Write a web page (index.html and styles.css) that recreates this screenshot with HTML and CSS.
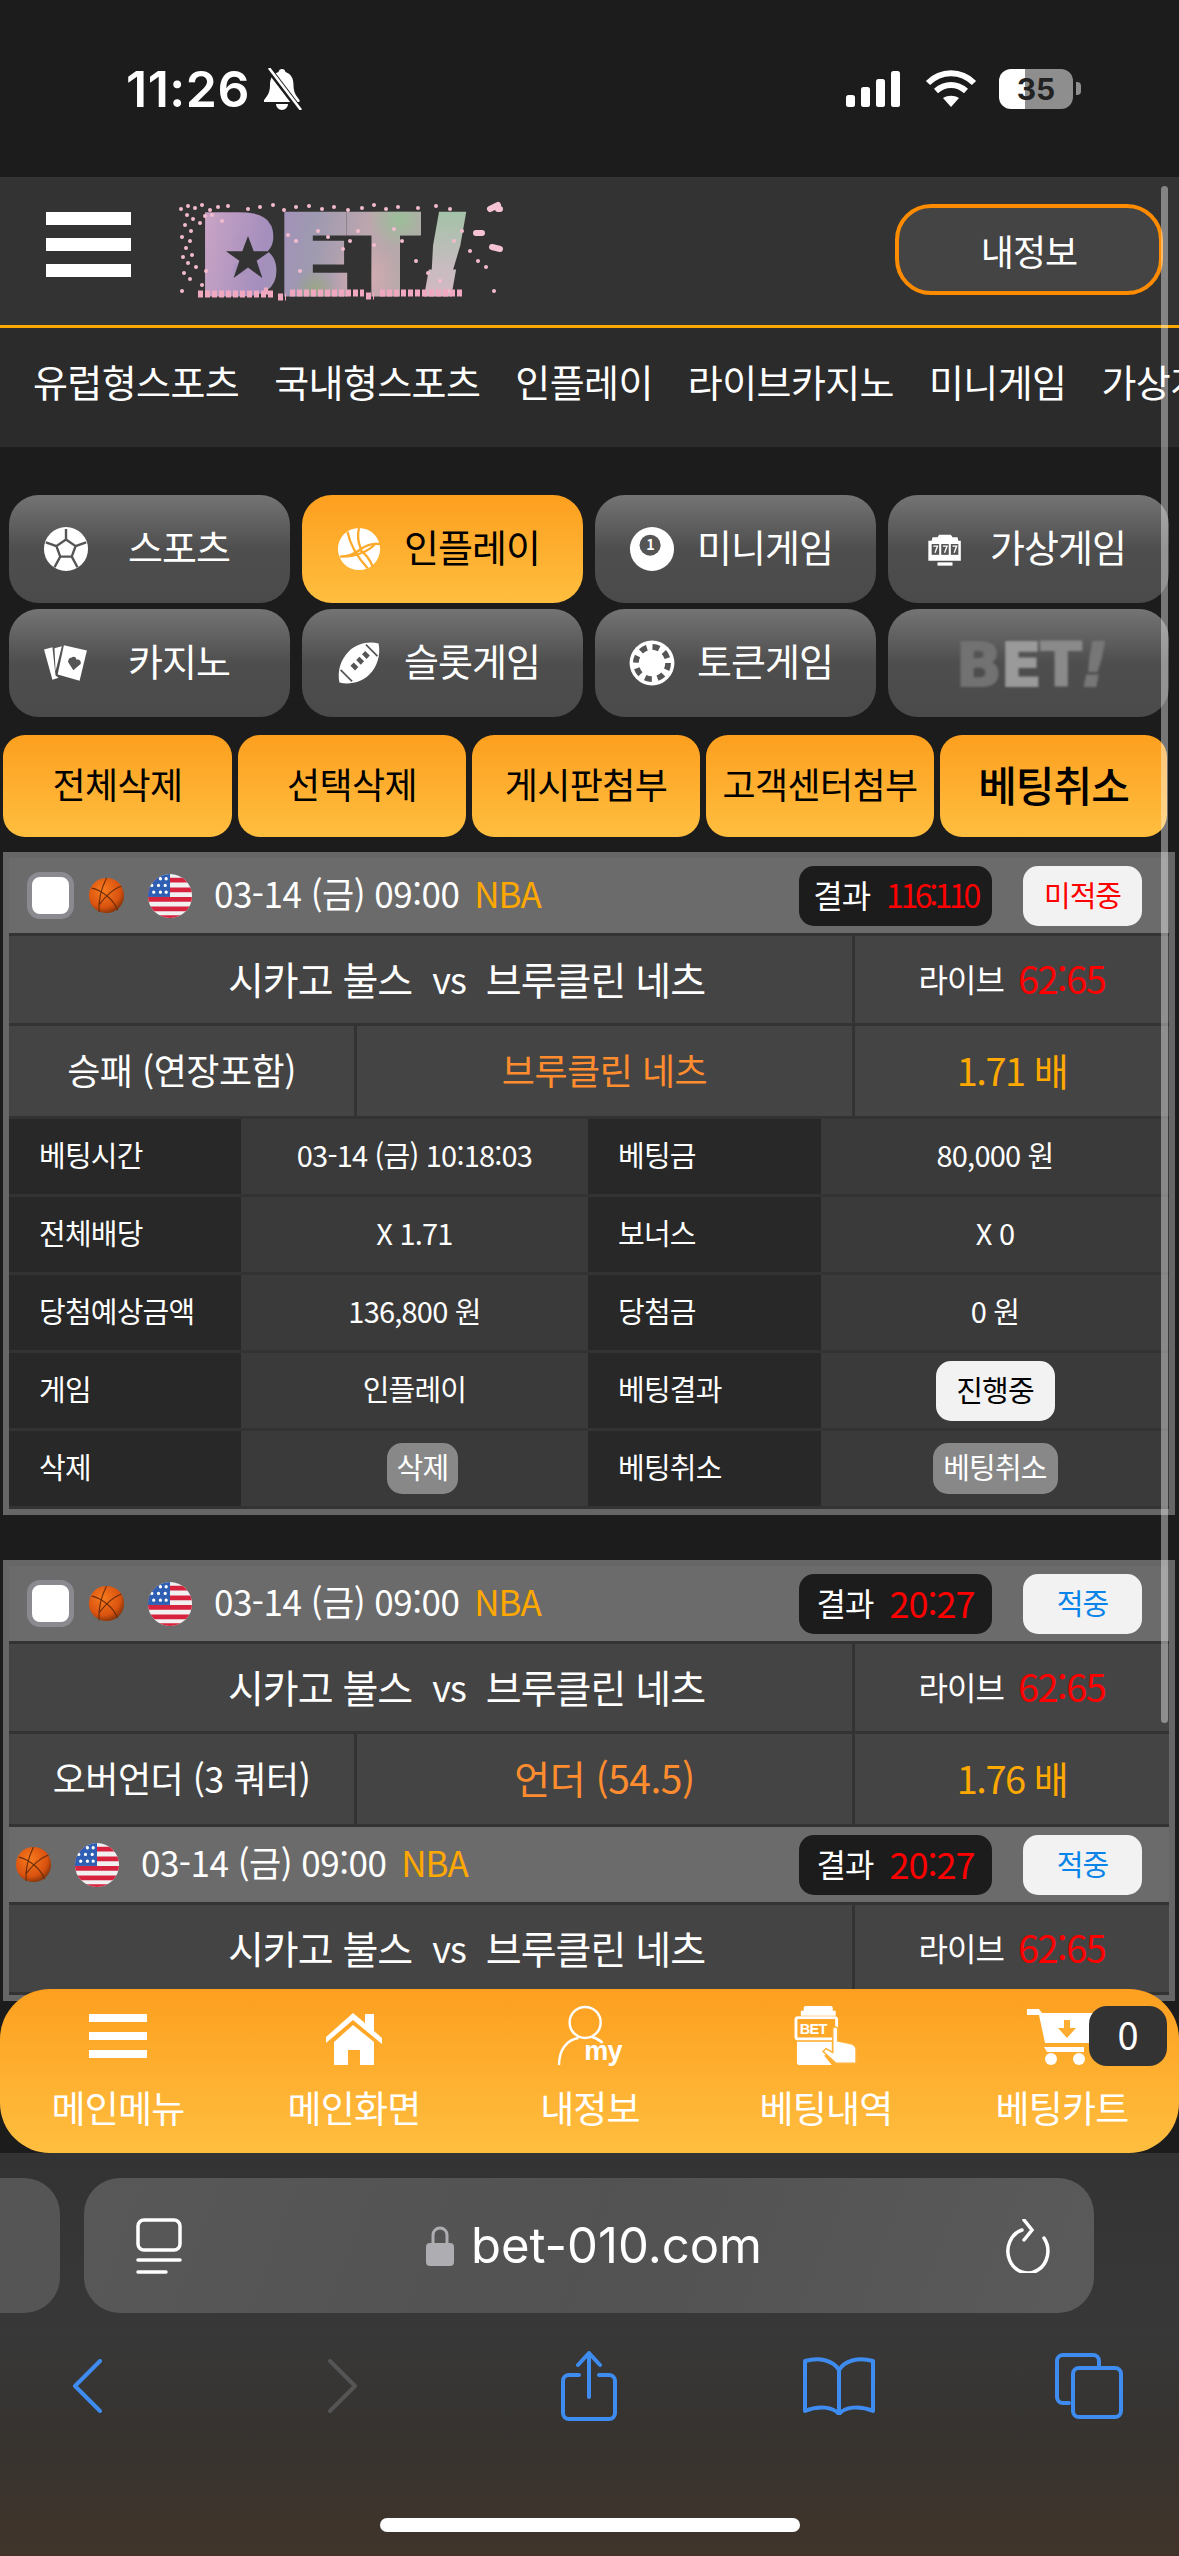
FILE: index.html
```html
<!DOCTYPE html>
<html lang="ko">
<head>
  <meta charset="UTF-8" />
  <meta name="viewport" content="width=device-width, initial-scale=1" />
  <title>BET!</title>
  <link rel="stylesheet" href="styles.css">
</head>
<body>

  <svg class="defs" aria-hidden="true">
    <defs>
      <radialGradient id="ballFill" cx="40%" cy="35%" r="70%">
        <stop offset="0" stop-color="#f77a1e" />
        <stop offset="0.7" stop-color="#d9520f" />
        <stop offset="1" stop-color="#7a3008" />
      </radialGradient>
      <clipPath id="flagClip"><circle cx="24" cy="24" r="23" /></clipPath>
      <symbol id="ball" viewBox="0 0 40 40">
        <circle cx="20" cy="20" r="19" fill="url(#ballFill)" />
        <path d="M4 12c10 2 24 12 28 24M20 1c-5 10-9 24-8 37M36 10c-8 2-18 12-24 20" fill="none" stroke="#6b2c08" stroke-width="1.2" />
      </symbol>
      <symbol id="flag" viewBox="0 0 48 48">
        <g clip-path="url(#flagClip)">
          <rect width="48" height="48" fill="#f1f1f1" />
          <path d="M0 5h48v5H0zM0 15h48v5H0zM0 25h48v5H0zM0 35h48v5H0zM0 44h48v4H0z" fill="#d8233f" />
          <rect width="24" height="25" fill="#2f5fb3" />
          <path d="M7 6h.01M14 6h.01M20 6h.01M5 13h.01M12 13h.01M19 13h.01M7 20h.01M14 20h.01M20 20h.01" stroke="#fff" stroke-width="3.4" stroke-linecap="round" />
        </g>
      </symbol>
    </defs>
  </svg>

  <!-- status bar -->
  <div class="status-bar">
    <div class="status-left">
      <span class="clock">11:26</span>
      <svg class="bell" viewBox="0 0 40 42">
        <path d="M20 1c2 0 3 1 3.500 3 6 2 8 7 8 13 0 7 2 10 6 15v2H2v-2c4-5 6-8 6-15 0-6 2-11 8.500-13C17 2 18 1 20 1zM14 36h12c0 3-3 6-6 6s-6-3-6-6z" fill="#fff" />
        <path d="M6 0l32 42" stroke="#1c1c1c" stroke-width="6" />
        <path d="M7 0l32 42" stroke="#fff" stroke-width="2.600" />
      </svg>
    </div>
    <div class="status-right">
      <svg class="signal" viewBox="0 0 56 36" fill="#fff">
        <rect x="0" y="24" width="9" height="12" rx="2.500" />
        <rect x="15" y="16" width="9" height="20" rx="2.500" />
        <rect x="30" y="8" width="9" height="28" rx="2.500" />
        <rect x="45" y="0" width="9" height="36" rx="2.500" />
      </svg>
      <svg class="wifi" viewBox="0 0 52 38" fill="none" stroke="#fff" stroke-width="6">
        <path d="M3 13c13-13 33-13 46 0" />
        <path d="M11 21c9-8 21-8 30 0" />
        <path d="M26 37l-8-9c5-3 11-3 16 0z" fill="#fff" stroke="none" />
      </svg>
      <div class="battery"><span class="battery-level">35</span></div>
      <span class="battery-tip"></span>
    </div>
  </div>

  <div class="page">
    <!-- top header -->
    <div class="site-header">
      <div class="burger"><span></span><span></span><span></span></div>
      <div class="logo">
        <span class="logo-word">BET</span><span class="logo-word logo-mark">!</span>
        <svg class="logo-star" viewBox="0 0 48 48"><polygon points="24,2 30,18 47,18 33,28 39,46 24,35 9,46 15,28 1,18 18,18" fill="#333" /></svg>
        <svg class="logo-petals" viewBox="0 0 328 101">
          <path d="M3 8h.01M10 5h.01M17 7h.01M24 4h.01M32 9h.01M40 6h.01M50 5h.01M9 14h.01M15 18h.01M7 24h.01M13 30h.01M4 36h.01M12 40h.01M8 47h.01M5 56h.01M10 62h.01M6 72h.01M12 78h.01M4 90h.01M14 54h.01M18 66h.01M22 22h.01M27 15h.01M34 14h.01M44 20h.01M28 70h.01M24 84h.01M70 8h.01M82 6h.01M95 4h.01M106 9h.01M118 6h.01M131 5h.01M144 8h.01M156 6h.01M170 9h.01M184 7h.01M196 4h.01M208 8h.01M220 6h.01M240 7h.01M258 5h.01M272 8h.01M110 34h.01M118 40h.01M122 70h.01M140 30h.01M150 36h.01M165 48h.01M172 40h.01M180 30h.01M196 44h.01M216 28h.01M224 40h.01M238 60h.01M250 72h.01M262 80h.01M276 40h.01M284 30h.01M292 50h.01M300 60h.01M308 66h.01M316 90h.01M270 90h.01" stroke="#f3bccd" stroke-width="4" stroke-linecap="round" />
          <path d="M20 93h76M86 90h4M100 96h8M112 92h74M188 95h8M202 92h84" stroke="#f0a8c0" stroke-width="7" stroke-dasharray="5 2" />
          <path d="M312 8l8-4M298 32h6M314 46l8 2M320 8h2" stroke="#f5c3d2" stroke-width="6" stroke-linecap="round" />
        </svg>
      </div>
      <button class="my-info">내정보</button>
    </div>

    <!-- category nav -->
    <div class="top-nav">
      <span>유럽형스포츠</span>
      <span>국내형스포츠</span>
      <span>인플레이</span>
      <span>라이브카지노</span>
      <span>미니게임</span>
      <span>가상게임</span>
    </div>

    <!-- game menu -->
    <div class="game-menu">
      <div class="game-btn">
        <svg class="game-icon" viewBox="0 0 48 48">
          <circle cx="24" cy="24" r="23" fill="#fff" />
          <path d="M24 14l10 7-4 11H18l-4-11zM24 14V3M34 21l11-4M30 32l6 11M18 32l-6 11M14 21L3 17" fill="none" stroke="#555" stroke-width="2.500" />
        </svg>
        <span>스포츠</span>
      </div>
      <div class="game-btn active">
        <svg class="game-icon" viewBox="0 0 48 48">
          <circle cx="24" cy="24" r="22" fill="#fff" />
          <path d="M24 2c-2 8-1 15 2 22M26 24c6-4 13-6 20-5M26 24c-6 5-13 8-22 8M12 6c2 10 8 24 21 38M6 32c12 0 26-4 36-14M24 24c8 6 12 12 14 18" fill="none" stroke="#fdaa2b" stroke-width="2.400" />
        </svg>
        <span>인플레이</span>
      </div>
      <div class="game-btn">
        <svg class="game-icon" viewBox="0 0 48 48">
          <circle cx="24" cy="24" r="23" fill="#fff" />
          <circle cx="22" cy="20" r="11" fill="#555" />
          <text class="icon-num" x="22" y="25">1</text>
        </svg>
        <span>미니게임</span>
      </div>
      <div class="game-btn">
        <svg class="game-icon slot-icon" viewBox="0 0 48 40">
          <path d="M9 6h6l2-3h14l2 3h6l1 4h3v24H8 4V10h4z" fill="#fff" />
          <path d="M15 36h18v4H15z" fill="#fff" />
          <rect x="8" y="14" width="9" height="13" fill="#555" />
          <rect x="19.500" y="14" width="9" height="13" fill="#555" />
          <rect x="31" y="14" width="9" height="13" fill="#555" />
          <path d="M10 16.500h5l-3 8M21.500 16.500h5l-3 8M33 16.500h5l-3 8" fill="none" stroke="#fff" stroke-width="1.600" />
        </svg>
        <span>가상게임</span>
      </div>
      <div class="game-btn">
        <svg class="game-icon" viewBox="0 0 44 34">
          <path d="M1 4l8-2 3 27 3 2-6 2zM11 3l7-2-6 24z" fill="#fff" />
          <path d="M20 0l22 5-7 29-21-6z" fill="#fff" />
          <path d="M27 12c2-2 5-1 5 2 2-1 5 1 4 4l-7 6-5-8c0-2 1-4 3-4z" fill="#555" />
        </svg>
        <span>카지노</span>
      </div>
      <div class="game-btn">
        <svg class="game-icon" viewBox="0 0 40 40">
          <path d="M37 3c2 10-1 20-8 27-7 7-17 9-26 7-2-10 1-20 8-27C18 3 28 1 37 3z" fill="#fff" />
          <path d="M4 26l10 10M26 4l10 10" stroke="#555" stroke-width="1.500" />
          <path d="M14 21l4 4M19 16l4 4M24 11l4 4" stroke="#555" stroke-width="4" />
        </svg>
        <span>슬롯게임</span>
      </div>
      <div class="game-btn">
        <svg class="game-icon" viewBox="0 0 40 40">
          <circle cx="20" cy="20" r="19.500" fill="#fff" />
          <circle cx="20" cy="20" r="14" fill="none" stroke="#555" stroke-width="5" stroke-dasharray="6 5" />
          <circle cx="20" cy="20" r="10" fill="#fff" />
        </svg>
        <span>토큰게임</span>
      </div>
      <div class="game-btn logo-btn">
        <span class="mini-logo"><b class="ml-b">B</b><b class="ml-e">E</b><b class="ml-t">T</b><b class="ml-x">!</b></span>
      </div>
    </div>

    <!-- actions -->
    <div class="action-row">
      <button>전체삭제</button>
      <button>선택삭제</button>
      <button>게시판첨부</button>
      <button>고객센터첨부</button>
      <button class="action-big">베팅취소</button>
    </div>

    <!-- bet 1 -->
    <div class="bet-card">
      <div class="bet-head">
        <span class="check"></span>
        <svg class="ball"><use href="#ball" /></svg>
        <svg class="flag"><use href="#flag" /></svg>
        <span class="bet-date">03-14 (금) 09:00</span>
        <span class="league">NBA</span>
        <span class="score-chip">결과<em class="score-tight">116:110</em></span>
        <span class="hit-badge miss">미적중</span>
      </div>
      <div class="row-teams">
        <div class="cell teams">시카고 불스<small>vs</small>브루클린 네츠</div>
        <div class="cell live">라이브<em>62:65</em></div>
      </div>
      <div class="row-pick">
        <div class="cell">승패 (연장포함)</div>
        <div class="cell pick">브루클린 네츠</div>
        <div class="cell odds">1.71 배</div>
      </div>
      <div class="info-row">
        <div class="info-label">베팅시간</div><div class="info-value">03-14 (금) 10:18:03</div>
        <div class="info-label">베팅금</div><div class="info-value">80,000 원</div>
      </div>
      <div class="info-row">
        <div class="info-label">전체배당</div><div class="info-value">X 1.71</div>
        <div class="info-label">보너스</div><div class="info-value">X 0</div>
      </div>
      <div class="info-row">
        <div class="info-label">당첨예상금액</div><div class="info-value">136,800 원</div>
        <div class="info-label">당첨금</div><div class="info-value">0 원</div>
      </div>
      <div class="info-row">
        <div class="info-label">게임</div><div class="info-value">인플레이</div>
        <div class="info-label">베팅결과</div><div class="info-value"><span class="pill-white">진행중</span></div>
      </div>
      <div class="info-row">
        <div class="info-label">삭제</div><div class="info-value"><span class="pill-gray pill-del">삭제</span></div>
        <div class="info-label">베팅취소</div><div class="info-value"><span class="pill-gray">베팅취소</span></div>
      </div>
    </div>

    <!-- bet 2 -->
    <div class="bet-card">
      <div class="bet-head">
        <span class="check"></span>
        <svg class="ball"><use href="#ball" /></svg>
        <svg class="flag"><use href="#flag" /></svg>
        <span class="bet-date">03-14 (금) 09:00</span>
        <span class="league">NBA</span>
        <span class="score-chip">결과<em>20:27</em></span>
        <span class="hit-badge">적중</span>
      </div>
      <div class="row-teams">
        <div class="cell teams">시카고 불스<small>vs</small>브루클린 네츠</div>
        <div class="cell live">라이브<em>62:65</em></div>
      </div>
      <div class="row-pick">
        <div class="cell">오버언더 (3 쿼터)</div>
        <div class="cell pick pick-num">언더 (54.5)</div>
        <div class="cell odds">1.76 배</div>
      </div>
      <div class="bet-head sub-head">
        <svg class="ball"><use href="#ball" /></svg>
        <svg class="flag"><use href="#flag" /></svg>
        <span class="bet-date">03-14 (금) 09:00</span>
        <span class="league">NBA</span>
        <span class="score-chip">결과<em>20:27</em></span>
        <span class="hit-badge">적중</span>
      </div>
      <div class="row-teams">
        <div class="cell teams">시카고 불스<small>vs</small>브루클린 네츠</div>
        <div class="cell live">라이브<em>62:65</em></div>
      </div>
    </div>

    <!-- page scrollbar -->
    <div class="scroll-thumb"></div>

    <!-- fixed bottom menu -->
    <div class="bottom-menu">
      <div class="bottom-item">
        <svg viewBox="0 0 58 44" class="bi-menu" fill="#fff"><rect width="58" height="8" /><rect y="18" width="58" height="8" /><rect y="36" width="58" height="8" /></svg>
        <span>메인메뉴</span>
      </div>
      <div class="bottom-item">
        <svg viewBox="0 0 56 54" class="bi-home" fill="#fff">
          <path d="M0 25L27 1l12 10V2h9v17l8 7v6L27 8 0 31z" />
          <path d="M27 13l21 17v23H34V38H22v15H8V30z" />
        </svg>
        <span>메인화면</span>
      </div>
      <div class="bottom-item">
        <svg viewBox="0 0 68 64" class="bi-user">
          <circle cx="29" cy="18" r="16" fill="none" stroke="#fff" stroke-width="2.500" />
          <path d="M2 62c0-16 8-26 20-28M36 33c4 1 8 3 11 6" fill="none" stroke="#fff" stroke-width="2.500" />
          <text class="icon-my" x="28" y="57">my</text>
        </svg>
        <span>내정보</span>
      </div>
      <div class="bottom-item">
        <svg viewBox="0 0 66 64" class="bi-bet">
          <path d="M10 6V3c0-1 1-2 2-2h26c1 0 2 1 2 2v3h3v5H7V6z" fill="#fff" />
          <rect x="2" y="13" width="42" height="22" rx="2" fill="none" stroke="#fff" stroke-width="3" />
          <text class="icon-bet" x="6" y="30">BET</text>
          <path d="M3 38h36v12l-8 2 8 10H6c-2 0-3-1-3-3z" fill="#fff" />
          <path d="M43 60L30 48l3-3 7 4V25c0-3 5-3 5 0v12l14 3c3 1 5 3 5 6v14z" fill="#fff" stroke="#fdb036" stroke-width="1.500" />
        </svg>
        <span>베팅내역</span>
      </div>
      <div class="bottom-item">
        <svg viewBox="0 0 70 58" class="bi-cart">
          <path d="M0 2h12l3 4h52v30H18L12 8H0z" fill="#fff" />
          <path d="M17 40h40v5H20z" fill="#fff" />
          <circle cx="24" cy="52" r="6" fill="#fff" />
          <circle cx="52" cy="52" r="6" fill="#fff" />
          <path d="M37 13h6v8h6l-9 10-9-10h6z" fill="#fdad32" />
        </svg>
        <span>베팅카트</span>
      </div>
      <div class="cart-count">0</div>
    </div>
  </div>

  <!-- safari toolbar -->
  <div class="browser">
    <div class="address-row">
      <div class="tab-peek"></div>
      <div class="address">
        <svg class="reader" viewBox="0 0 46 56" fill="none" stroke="#fff" stroke-width="3.500" stroke-linecap="round">
          <rect x="2" y="2" width="42" height="30" rx="6" />
          <path d="M2 42h42M2 54h28" />
        </svg>
        <div class="url">
          <svg class="lock" viewBox="0 0 28 40">
            <path d="M7 18V9a7 7 0 0 1 14 0v9" fill="none" stroke="#aeaeb2" stroke-width="3" />
            <rect y="17" width="28" height="23" rx="4" fill="#aeaeb2" />
          </svg>
          <span>bet-010.com</span>
        </div>
        <svg class="reload" viewBox="0 0 44 54" fill="none" stroke="#fff" stroke-width="3.500" stroke-linecap="round">
          <path d="M16 11a20 22 0 1 0 22 8" />
          <path d="M18 1l8 10-8 10" />
        </svg>
      </div>
    </div>
    <div class="toolbar">
      <svg class="tb-back" viewBox="0 0 30 54"><path d="M28 2L3 27l25 25" /></svg>
      <svg class="tb-next" viewBox="0 0 30 54"><path d="M2 2l25 25L2 52" /></svg>
      <svg class="tb-share" viewBox="0 0 56 70"><path d="M18 24H8a6 6 0 0 0-6 6v32a6 6 0 0 0 6 6h40a6 6 0 0 0 6-6V30a6 6 0 0 0-6-6H38M28 46V3M17 14L28 2l11 12" /></svg>
      <svg class="tb-book" viewBox="0 0 72 58"><path d="M36 13C30 3 16 0 2 4v50c14-6 28-4 34 3 6-7 20-9 34-3V4C56 0 42 3 36 13zM36 13v44" /></svg>
      <svg class="tb-tabs" viewBox="0 0 68 66"><path d="M14 50H8a6 6 0 0 1-6-6V8a6 6 0 0 1 6-6h30a6 6 0 0 1 6 6v6" /><rect x="18" y="15" width="48" height="49" rx="6" /></svg>
    </div>
    <div class="home-bar"></div>
  </div>

</body>
</html>
```
FILE: styles.css
```css
* {
  box-sizing: border-box;
  margin: 0;
  padding: 0;
}

html,
body {
  width: 1179px;
  height: 2556px;
  overflow: hidden;
}

body {
  display: flex;
  flex-direction: column;
  background: #1c1c1c;
  color: #fff;
  font-family: "Noto Sans CJK KR", "Noto Sans", sans-serif;
}

button {
  font-family: inherit;
  border: none;
}

em {
  font-style: normal;
}

.defs {
  position: absolute;
  width: 0;
  height: 0;
}

/* status bar */
.status-bar {
  flex: none;
  height: 177px;
  display: flex;
  align-items: center;
  justify-content: space-between;
  padding: 0 98px 0 126px;
}

.status-left,
.status-right {
  display: flex;
  align-items: center;
}

.clock {
  font-family: Inter, sans-serif;
  font-size: 50px;
  font-weight: 600;
  letter-spacing: 0.5px;
}

.bell {
  width: 40px;
  height: 42px;
  margin-left: 12px;
}

.signal {
  width: 58px;
  height: 36px;
}

.wifi {
  width: 52px;
  height: 38px;
  margin-left: 22px;
}

.battery {
  width: 74px;
  height: 40px;
  margin-left: 22px;
  border-radius: 12px;
  background: linear-gradient(to right, #fff 35%, #8e8e8e 35%);
  text-align: center;
}

.battery-level {
  color: #222;
  font-family: Inter, sans-serif;
  font-size: 30px;
  font-weight: 700;
  line-height: 40px;
}

.battery-tip {
  width: 5px;
  height: 13px;
  margin-left: 3px;
  border-radius: 0 4px 4px 0;
  background: #8e8e8e;
}

/* page */
.page {
  position: relative;
  flex: none;
  height: 1976px;
  overflow: hidden;
}

.site-header {
  height: 151px;
  display: flex;
  align-items: center;
  padding: 0 16px 0 46px;
  background: #333;
  border-bottom: 3px solid #ffa800;
}

.burger {
  width: 85px;
  display: flex;
  flex-direction: column;
  gap: 13px;
  margin-bottom: 14px;
}

.burger span {
  height: 13px;
  background: #fff;
}

.logo {
  position: relative;
  width: 328px;
  height: 101px;
  margin-left: 47px;
  padding-left: 22px;
  white-space: nowrap;
  font-family: "DejaVu Sans", sans-serif;
  font-size: 104px;
  font-weight: 700;
  line-height: 110px;
  letter-spacing: 0;
}

/* fills the counters of the B so the star sits on a solid letter */
.logo::before {
  content: "";
  position: absolute;
  left: 34px;
  top: 18px;
  width: 56px;
  height: 70px;
  border-radius: 4px;
  background: linear-gradient(120deg, #c9a3c4, #a58fbd 60%, #b79aa8);
}

.logo-word {
  position: relative;
  display: inline-block;
  -webkit-text-stroke: 9px transparent;
  background:
    radial-gradient(circle at 52% 80%, rgba(150, 170, 115, 0.7), transparent 14%),
    radial-gradient(circle at 90% 16%, rgba(150, 195, 150, 0.85), transparent 14%),
    radial-gradient(circle at 75% 70%, rgba(225, 175, 180, 0.7), transparent 20%),
    linear-gradient(100deg, #cda6c6 0%, #a58fbd 30%, #9e9ab0 50%, #bda6ae 72%, #b0aaa8 100%);
  -webkit-background-clip: text;
  background-clip: text;
  color: transparent;
}

.logo-mark {
  transform: skewX(-10deg);
  background: linear-gradient(#9dc3a3, #c7bcc0 60%, #d9b6c4);
  -webkit-background-clip: text;
  background-clip: text;
}

.logo-star {
  position: absolute;
  left: 47px;
  top: 33px;
  width: 46px;
  height: 46px;
}

.logo-petals {
  position: absolute;
  left: 0;
  top: 0;
  width: 328px;
  height: 101px;
}

.my-info {
  width: 268px;
  height: 91px;
  margin: 0 0 3px auto;
  background: #444;
  border: 4px solid #ff8c00;
  border-radius: 36px;
  color: #fff;
  font-size: 36px;
  letter-spacing: -1px;
}

.top-nav {
  height: 119px;
  display: flex;
  align-items: center;
  gap: 35px;
  padding: 0 0 14px 33px;
  background: #2b2b2b;
  font-size: 38px;
  letter-spacing: -0.6px;
  white-space: nowrap;
  overflow: hidden;
}

/* game menu */
.game-menu {
  display: grid;
  grid-template-columns: repeat(4, 281px);
  grid-auto-rows: 108px;
  gap: 6px 12px;
  margin: 48px 0 0 9px;
}

.game-btn {
  display: grid;
  grid-template-columns: 114px 112px;
  align-items: center;
  justify-items: center;
  border-radius: 30px;
  background: linear-gradient(#747474, #4e4e4e 50%, #4a4a4a);
  font-size: 38px;
  letter-spacing: -1px;
  white-space: nowrap;
}

.game-btn span {
  padding-bottom: 8px;
}

.game-btn.active {
  background: linear-gradient(#fd9f1f, #ffbe3f);
  color: #000;
}

.game-icon {
  width: 46px;
  height: 46px;
}

.slot-icon {
  width: 40px;
  height: 34px;
}

.icon-num {
  fill: #fff;
  font-size: 15px;
  font-weight: 700;
  text-anchor: middle;
}

.logo-btn {
  display: flex;
  justify-content: center;
}

.game-btn .mini-logo {
  padding: 4px 0 0 6px;
  font-family: "DejaVu Sans", sans-serif;
  font-size: 60px;
  line-height: 60px;
  letter-spacing: -1px;
  -webkit-text-stroke: 2px currentColor;
  filter: blur(1px);
}

.ml-b { color: #727272; }
.ml-e { color: #9a9a9a; }
.ml-t { color: #8a8a8a; }
.ml-x { color: #777; font-style: italic; }

/* action buttons */
.action-row {
  display: grid;
  grid-template-columns: 229px 228px 228px 228px 227px;
  gap: 6px;
  height: 102px;
  margin: 18px 0 0 3px;
}

.action-row button {
  padding-bottom: 6px;
  border-radius: 22px;
  background: linear-gradient(#fd9f1f, #ffbe3f);
  color: #000;
  font-size: 36px;
  letter-spacing: -0.6px;
  white-space: nowrap;
}

.action-row .action-big {
  font-size: 42px;
  font-weight: 500;
  letter-spacing: -1px;
}

/* bet cards */
.bet-card {
  width: 1172px;
  margin: 15px 0 0 3px;
  border: 6px solid #666;
  padding-bottom: 3px;
  background: #333;
}

.bet-card + .bet-card {
  margin-top: 45px;
}

.bet-head {
  height: 75px;
  display: flex;
  align-items: center;
  padding: 0 27px 0 18px;
  background: #6b6b6b;
  white-space: nowrap;
}

.sub-head {
  margin-top: 3px;
  padding-left: 0;
}

.sub-head .ball {
  margin-left: 6px;
}

.check {
  width: 47px;
  height: 47px;
  border: 5px solid #8a8a90;
  border-radius: 13px;
  background: #fff;
}

.ball {
  width: 37px;
  height: 37px;
  margin-left: 14px;
}

.flag {
  width: 46px;
  height: 46px;
  margin-left: 22px;
}

.bet-date {
  margin-left: 21px;
  padding-bottom: 6px;
  font-size: 35px;
  letter-spacing: -0.5px;
}

.league {
  margin-left: 15px;
  padding-bottom: 6px;
  color: #ffa800;
  font-size: 35px;
  letter-spacing: -1px;
}

.score-chip {
  display: flex;
  align-items: center;
  justify-content: center;
  width: 193px;
  height: 60px;
  margin-left: auto;
  padding-bottom: 4px;
  border-radius: 15px;
  background: #1c1c1c;
  font-size: 32px;
  letter-spacing: -1px;
}

.score-chip em {
  margin-left: 16px;
  color: #f00;
  font-size: 36px;
}

.score-chip .score-tight {
  font-size: 32px;
  letter-spacing: -3.4px;
}

.hit-badge {
  width: 119px;
  height: 60px;
  margin-left: 31px;
  border-radius: 15px;
  background: #f2f2f2;
  color: #0a84e8;
  font-size: 29px;
  letter-spacing: -1px;
  line-height: 56px;
  text-align: center;
}

.hit-badge.miss {
  color: #f00;
}

.row-teams,
.row-pick {
  display: grid;
  gap: 3px;
  margin-top: 3px;
}

.row-teams {
  grid-template-columns: 843px 1fr;
  height: 87px;
}

.row-pick {
  grid-template-columns: 345px 495px 1fr;
  height: 90px;
}

.cell {
  display: flex;
  align-items: center;
  justify-content: center;
  padding-bottom: 4px;
  background: #444;
  font-size: 36px;
  letter-spacing: -0.5px;
  white-space: nowrap;
}

.teams {
  padding-left: 72px;
  font-size: 39px;
  letter-spacing: -1px;
}

.teams small {
  margin: 0 20px;
  font-size: 36px;
}

.live {
  font-size: 32px;
  letter-spacing: -1px;
}

.live em {
  margin-left: 14px;
  color: #f00;
  font-size: 38px;
  letter-spacing: -1.5px;
}

.pick {
  color: #ff8c2e;
}

.pick-num {
  font-size: 39px;
}

.odds {
  color: #ffa800;
  font-size: 38px;
  letter-spacing: -1.5px;
}

.info-row {
  display: grid;
  grid-template-columns: 232px 347px 233px 1fr;
  height: 75px;
  margin-top: 3px;
  font-size: 29px;
  letter-spacing: -0.8px;
  white-space: nowrap;
}

.info-label {
  display: flex;
  align-items: center;
  padding: 0 0 6px 30px;
  background: #282828;
}

.info-value {
  display: flex;
  align-items: center;
  justify-content: center;
  padding-bottom: 6px;
  background: #3a3a3a;
}

.pill-white {
  width: 119px;
  height: 60px;
  margin-top: 6px;
  border-radius: 15px;
  background: #f2f2f2;
  color: #000;
  line-height: 56px;
  text-align: center;
}

.pill-gray {
  width: 125px;
  height: 51px;
  margin-top: 6px;
  border-radius: 15px;
  background: #888;
  line-height: 47px;
  text-align: center;
}

.pill-del {
  width: 71px;
  margin-left: 16px;
}

.scroll-thumb {
  position: absolute;
  left: 1161px;
  top: 9px;
  width: 7px;
  height: 1537px;
  border-radius: 4px;
  background: rgba(255, 255, 255, 0.4);
}

/* bottom menu lies over the list */
.bottom-menu {
  position: absolute;
  left: 0;
  bottom: 0;
  width: 1179px;
  height: 164px;
  display: grid;
  grid-template-columns: repeat(5, 236px);
  border-radius: 50px;
  background: linear-gradient(#fd9f1f, #ffbe3f);
}

.bottom-item {
  display: flex;
  flex-direction: column;
  align-items: center;
  gap: 20px;
  padding-top: 16px;
  font-size: 37px;
  line-height: 40px;
  letter-spacing: -0.8px;
  white-space: nowrap;
}

.bottom-item svg {
  height: 62px;
}

.bi-menu {
  width: 58px;
  padding: 9px 0;
}

.bi-home {
  width: 56px;
  padding-top: 6px;
}

.bi-user {
  width: 68px;
}

.bi-bet {
  width: 66px;
}

.bi-cart {
  width: 70px;
}

.icon-my {
  fill: #fff;
  font-family: "Liberation Sans", sans-serif;
  font-size: 28px;
  font-weight: 700;
}

.icon-bet {
  fill: #fff;
  font-family: "Liberation Sans", sans-serif;
  font-size: 15px;
  font-weight: 700;
}

.cart-count {
  position: absolute;
  left: 1089px;
  top: 17px;
  width: 78px;
  height: 60px;
  border-radius: 18px;
  background: #333;
  font-size: 38px;
  line-height: 56px;
  text-align: center;
}

/* browser toolbar */
.browser {
  flex: 1;
  display: flex;
  flex-direction: column;
  background: linear-gradient(#333 0%, #383838 45%, #363330 68%, #40342a 100%);
}

.address-row {
  display: flex;
  gap: 24px;
  margin-top: 25px;
}

.tab-peek {
  width: 60px;
  height: 135px;
  border-radius: 0 36px 36px 0;
  background: #555;
}

.address {
  width: 1010px;
  height: 135px;
  display: flex;
  align-items: center;
  justify-content: space-between;
  padding: 0 44px 0 52px;
  border-radius: 36px;
  background: linear-gradient(110deg, #585858, #525252 50%, #5a5a5a);
}

.reader {
  width: 46px;
  height: 56px;
}

.url {
  display: flex;
  align-items: center;
  gap: 17px;
  font-family: Inter, sans-serif;
  font-size: 49px;
}

.lock {
  width: 28px;
  height: 40px;
}

.reload {
  width: 44px;
  height: 54px;
}

.toolbar {
  display: grid;
  grid-template-columns: 256px 233px 242px 252px auto;
  align-items: center;
  height: 70px;
  margin-top: 38px;
  padding-left: 72px;
}

.toolbar svg {
  fill: none;
  stroke: #3f8cf0;
  stroke-width: 4;
  stroke-linecap: round;
  stroke-linejoin: round;
}

.tb-back,
.tb-next {
  width: 30px;
  height: 54px;
}

.toolbar .tb-next {
  stroke: #555;
}

.tb-share {
  width: 56px;
  height: 70px;
}

.tb-book {
  width: 72px;
  height: 58px;
}

.tb-tabs {
  width: 68px;
  height: 66px;
}

.home-bar {
  width: 420px;
  height: 14px;
  margin: auto auto 24px;
  border-radius: 7px;
  background: #fff;
}
```
